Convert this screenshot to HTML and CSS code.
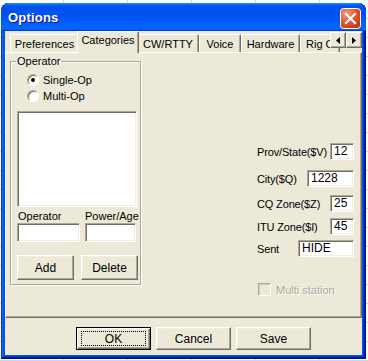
FILE: index.html
```html
<!DOCTYPE html>
<html>
<head>
<meta charset="utf-8">
<title>Options</title>
<link rel="stylesheet" href="styles.css">
</head>
<body>
<div class="window">
  <div class="titlebar">
    <span class="title">Options</span>
    <span class="close">
      <svg width="21" height="21" viewBox="0 0 21 21">
        <defs>
          <radialGradient id="cg" cx="30%" cy="25%" r="85%">
            <stop offset="0" stop-color="#f39a7c"/>
            <stop offset="0.55" stop-color="#e2582f"/>
            <stop offset="1" stop-color="#c2361a"/>
          </radialGradient>
        </defs>
        <rect x="0.5" y="0.5" width="20" height="20" rx="3" fill="url(#cg)" stroke="#fff"/>
        <path d="M6 6 L15 15 M15 6 L6 15" stroke="#fff" stroke-width="2.2" stroke-linecap="square"/>
      </svg>
    </span>
  </div>
  <div class="client">
    <div class="tabctl">
      <div class="strip">
        <div class="tab t-pref">Preferences</div>
        <div class="tab t-cat sel">Categories</div>
        <div class="tab t-cw">CW/RTTY</div>
        <div class="tab t-voice">Voice</div>
        <div class="tab t-hw">Hardware</div>
        <div class="tab t-rig">Rig Control</div>
        <div class="scroller">
          <span class="sbtn"><svg width="4" height="7" viewBox="0 0 4 7"><path d="M4 0 L0 3.5 L4 7 Z" fill="#000"/></svg></span>
          <span class="sbtn"><svg width="4" height="7" viewBox="0 0 4 7"><path d="M0 0 L4 3.5 L0 7 Z" fill="#000"/></svg></span>
        </div>
      </div>
      <div class="panel">
        <fieldset class="group">
          <legend>Operator</legend>
          <div class="radio-row"><span class="radio on"></span><span>Single-Op</span></div>
          <div class="radio-row"><span class="radio"></span><span>Multi-Op</span></div>
          <div class="listbox"></div>
          <div class="pair labels">
            <span class="c1">Operator</span>
            <span class="c2">Power/Age</span>
          </div>
          <div class="pair">
            <span class="edit c1"></span>
            <span class="edit c2"></span>
          </div>
          <div class="pair btns">
            <span class="btn b-add">Add</span>
            <span class="btn b-del">Delete</span>
          </div>
        </fieldset>
        <div class="fields">
          <div class="frow r1"><span class="lbl">Prov/State($V)</span><span class="edit w-sm">12</span></div>
          <div class="frow r2"><span class="lbl">City($Q)</span><span class="edit w-md">1228</span></div>
          <div class="frow r3"><span class="lbl">CQ Zone($Z)</span><span class="edit w-sm">25</span></div>
          <div class="frow r4"><span class="lbl">ITU Zone($I)</span><span class="edit w-sm">45</span></div>
          <div class="frow r5"><span class="lbl">Sent</span><span class="edit w-lg">HIDE</span></div>
          <div class="check-row"><span class="check"></span><span class="disabled">Multi station</span></div>
        </div>
      </div>
    </div>
    <div class="actions">
      <span class="btn big default"><span class="focus">OK</span></span>
      <span class="btn big">Cancel</span>
      <span class="btn big">Save</span>
    </div>
  </div>
</div>
</body>
</html>
```

FILE: styles.css
```css
html, body {
  margin: 0;
  padding: 0;
}

body {
  width: 368px;
  height: 361px;
  overflow: hidden;
  background-color: #fff;
  background-image:
    repeating-linear-gradient(90deg, transparent 0 63px, #d4d4d4 63px 64px),
    repeating-linear-gradient(180deg, transparent 0 18px, #d4d4d4 18px 19px);
  font-family: "Liberation Sans", Arial, sans-serif;
  font-size: 11px;
  color: #000;
}

.window {
  margin: 3px 0 0 1px;
  width: 365px;
  height: 356px;
  box-sizing: border-box;
  border-radius: 8px 8px 0 0;
  background: #0055e5;
  box-shadow:
    inset -1px -1px #00138c,
    inset 1px 1px #0831d9,
    inset -2px -2px #001ea0,
    inset 2px 2px #166aee,
    inset -3px -3px #003bda,
    inset 3px 3px #0855dd;
  display: flex;
  flex-direction: column;
  padding: 0 4px 4px 4px;
  overflow: hidden;
}

.titlebar {
  height: 28px;
  margin: 0 -4px;
  flex: none;
  border-radius: 8px 8px 0 0;
  background: linear-gradient(180deg, #0997ff 0%, #0053ee 10%, #0050ee 40%, #0066ff 86%, #0066ff 92%, #005bff 95%, #003dd7 97%, #0044e0 100%);
  display: flex;
  align-items: center;
  padding: 0 5px 0 7px;
  box-sizing: border-box;
}

.title {
  flex: 1;
  color: #fff;
  font-family: "Liberation Sans", Arial, sans-serif;
  font-weight: bold;
  font-size: 13px;
  letter-spacing: 0.2px;
  text-shadow: 1px 1px #0f1089;
}

.close {
  display: flex;
  width: 21px;
  height: 21px;
  margin-top: 3px;
}

.client {
  flex: 1;
  background: #ece9d8;
  display: flex;
  flex-direction: column;
}

.tabctl {
  display: flex;
  flex-direction: column;
  height: 287px;
}

.strip {
  position: relative;
  height: 21px;
  display: flex;
  align-items: flex-end;
  padding-left: 5px;
  flex: none;
}

.tab {
  flex: none;
  height: 18px;
  box-sizing: border-box;
  border-top: 1px solid #fff;
  border-left: 1px solid #fff;
  border-right: 1px solid #716f64;
  box-shadow: inset -1px 0 #aca899;
  border-radius: 2px 2px 0 0;
  display: flex;
  justify-content: center;
  padding-top: 3px;
  white-space: nowrap;
  overflow: hidden;
}

.t-pref { width: 69px; }
.t-cat { width: 58px; }
.t-cw { width: 62px; }
.t-voice { width: 42px; }
.t-hw { width: 59px; }
.t-rig { width: 40px; justify-content: flex-start; padding-left: 5px; }

.tab.sel {
  width: 62px;
  height: 22px;
  margin: 0 -2px -1px;
  position: relative;
  z-index: 2;
  background: #ece9d8;
  padding-top: 2px;
}

.scroller {
  position: absolute;
  right: 0;
  top: 1px;
  display: flex;
  z-index: 3;
}

.sbtn {
  width: 16px;
  height: 16px;
  box-sizing: border-box;
  background: #ece9d8;
  border: 1px solid;
  border-color: #fff #716f64 #716f64 #fff;
  box-shadow: inset -1px -1px #aca899;
  display: flex;
  align-items: center;
  justify-content: center;
}

.panel {
  flex: 1;
  position: relative;
  z-index: 1;
  border: 1px solid;
  border-color: #fff #716f64 #716f64 #fff;
  box-shadow: inset -1px -1px #aca899;
  padding: 2px 0 0 4px;
  display: flex;
  align-items: flex-start;
}

.group {
  margin: 0;
  width: 131px;
  box-sizing: border-box;
  padding: 4px 0 4px 6px;
  border: 1px solid #aca899;
  box-shadow: inset 1px 1px #fff, 1px 1px #fff;
  min-width: 0;
  display: flex;
  flex-direction: column;
}

.group legend {
  padding: 0 1px;
  margin-left: -1px;
  line-height: 13px;
}

.radio-row {
  height: 16px;
  display: flex;
  align-items: center;
  gap: 4px;
  padding-left: 10px;
}

.radio {
  width: 12px;
  height: 12px;
  box-sizing: border-box;
  border-radius: 50%;
  background: #fff;
  border: 1px solid;
  border-color: #aca899 #fff #fff #aca899;
  box-shadow: inset 1px 1px #716f64;
  display: flex;
  align-items: center;
  justify-content: center;
}

.radio.on::after {
  content: "";
  width: 4px;
  height: 4px;
  border-radius: 50%;
  background: #000;
}

.listbox {
  margin-top: 7px;
  width: 120px;
  height: 96px;
  box-sizing: border-box;
  background: #fff;
  border: 1px solid;
  border-color: #aca899 #fff #fff #aca899;
  box-shadow: inset 1px 1px #716f64, inset -1px -1px #f1efe2;
}

.pair {
  display: flex;
}

.pair .c1 {
  width: 63px;
}

.pair .c2 {
  width: 51px;
  margin-left: 5px;
}

.labels {
  margin-top: 3px;
  line-height: 13px;
}

.labels .c1 {
  padding-left: 1px;
  box-sizing: border-box;
}

.edit {
  height: 19px;
  box-sizing: border-box;
  background: #fff;
  border: 1px solid;
  border-color: #aca899 #fff #fff #aca899;
  box-shadow: inset 1px 1px #716f64, inset -1px -1px #f1efe2;
  padding: 1px 0 0 3px;
  line-height: 15px;
  font-size: 12px;
  display: block;
}

.btns {
  margin-top: 13px;
  gap: 7px;
}

.btn {
  height: 25px;
  box-sizing: border-box;
  border: 1px solid;
  border-color: #fff #716f64 #716f64 #fff;
  box-shadow: inset -1px -1px #aca899, inset 1px 1px #f1efe2;
  background: #ece9d8;
  display: flex;
  align-items: center;
  justify-content: center;
  font-size: 12px;
}

.b-add { width: 57px; }
.b-del { width: 57px; }

.fields {
  margin-left: 116px;
  width: 97px;
  padding-top: 88px;
  display: flex;
  flex-direction: column;
}

.frow {
  display: flex;
  align-items: center;
  justify-content: space-between;
  font-size: 11px;
}

.frow .lbl {
  letter-spacing: -0.15px;
  white-space: nowrap;
}

.frow .edit {
  height: 17px;
  line-height: 13px;
  flex: none;
}

.r2 { margin-top: 10px; }
.r3 { margin-top: 8px; }
.r4 { margin-top: 6px; }
.r5 { margin-top: 5px; }

.w-sm { width: 24px; }
.w-md { width: 47px; }
.w-lg { width: 56px; }

.check-row {
  margin-top: 26px;
  margin-left: 1px;
  display: flex;
  align-items: center;
  gap: 5px;
}

.check {
  width: 13px;
  height: 13px;
  box-sizing: border-box;
  background: #ece9d8;
  border: 1px solid;
  border-color: #aca899 #fff #fff #aca899;
  box-shadow: inset 1px 1px #cfcbb8;
}

.disabled {
  color: #aca899;
  text-shadow: 1px 1px #fff;
}

.actions {
  display: flex;
  gap: 5px;
  padding: 9px 0 0 71px;
}

.btn.big {
  width: 75px;
  height: 23px;
}

.btn.default {
  border: 1px solid #000;
  box-shadow: inset 1px 1px #fff, inset -1px -1px #716f64, inset -2px -2px #aca899;
}

.focus {
  width: 65px;
  height: 15px;
  box-sizing: border-box;
  border: 1px dotted #000;
  display: flex;
  align-items: center;
  justify-content: center;
}
```
